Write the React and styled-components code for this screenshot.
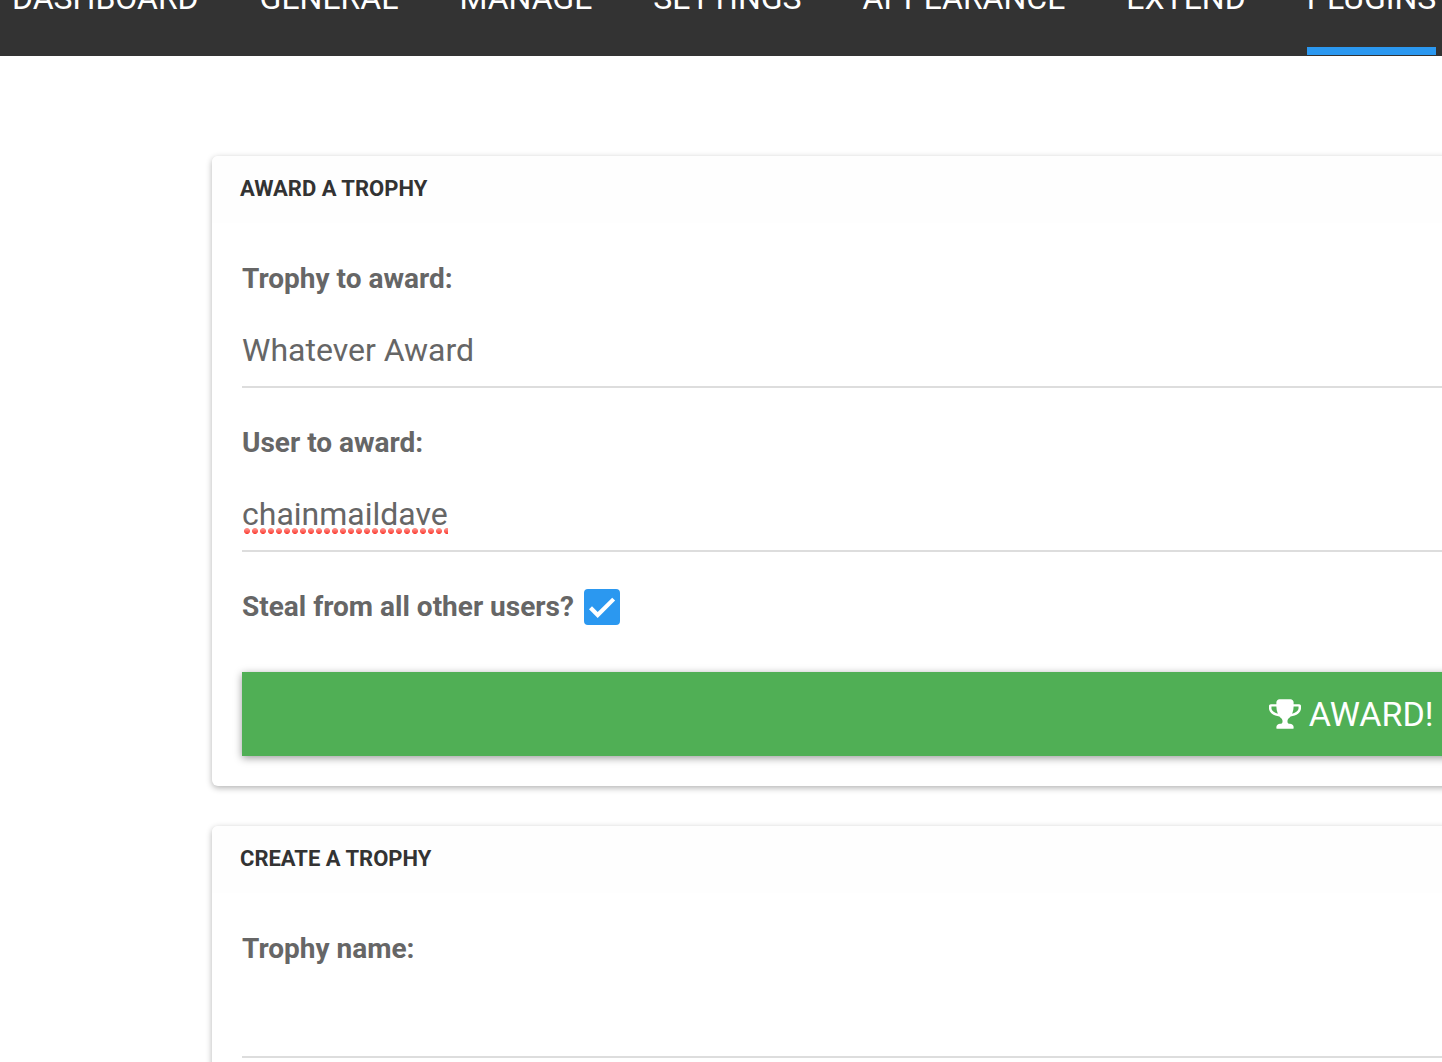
import React, { useState } from 'react';
import styled, { createGlobalStyle } from 'styled-components';

const GlobalStyle = createGlobalStyle`
  *, *::before, *::after { box-sizing: border-box; }
  body {
    margin: 0;
    background: #fff;
    color: #666;
    font-family: Roboto, "Liberation Sans", sans-serif;
  }
`;

const Page = styled.div`
  height: 100vh;
  overflow: hidden;
`;

const TopBar = styled.header`
  height: 56px;
  overflow: hidden;
  background: #333;
`;

const Menu = styled.nav`
  display: flex;
  align-items: flex-end;
  gap: 61px;
  height: 100%;
  padding: 0 0 1px 12px;
`;

const MenuLink = styled.a`
  flex: none;
  padding-bottom: 29px;
  border-bottom: 8px solid ${({ $active }) => ($active ? '#2b98f0' : 'transparent')};
  color: #fff;
  font-size: 32px;
  line-height: 40px;
  text-decoration: none;
  text-transform: uppercase;
`;

const Content = styled.main`
  display: flex;
  flex-direction: column;
  gap: 40px;
  width: 158vw;
  margin: 100px 0 40px 212px;
`;

const Card = styled.section`
  border-radius: 6px;
  background: #fff;
  box-shadow: 0 2px 6px rgba(0, 0, 0, 0.3);
`;

const CardTitle = styled.h2`
  margin: 0;
  padding: 17px 28px 18px;
  border-radius: 6px 6px 0 0;
  background: #fefefe;
  color: #333;
  font-size: 22px;
  font-weight: 700;
  line-height: 32px;
  text-transform: uppercase;
`;

const Form = styled.form`
  display: flex;
  flex-direction: column;
  gap: 35px;
  padding: 36px 30px 30px;
`;

const Field = styled.div`
  display: flex;
  flex-direction: column;
  gap: 15px;
`;

const Label = styled.label`
  font-size: 28px;
  font-weight: 700;
  line-height: 40px;
`;

const ControlLine = styled.div`
  display: flex;
  height: 74px;
  border-bottom: 2px solid #ddd;
`;

const controlText = `
  min-width: 0;
  padding: 0;
  border: 0;
  outline: 0;
  appearance: none;
  background: transparent;
  color: #666;
  font-family: inherit;
  font-size: 32px;
`;

const Select = styled.select`
  ${controlText}
  flex: 1;
`;

const TextInput = styled.input`
  ${controlText}
  flex: 1;
  ${({ $fit }) => $fit && 'field-sizing: content;'}
`;

const Misspelled = styled.span`
  position: relative;
  display: flex;

  &::after {
    content: '';
    position: absolute;
    right: 0;
    bottom: 16px;
    left: 1px;
    height: 6px;
    background: linear-gradient(#ff9c96, #fb3b30);
    mask: radial-gradient(circle at 4px 3px, #000 2.6px, transparent 3.4px) 0 0 / 8px 6px repeat-x;
    pointer-events: none;
  }
`;

const CheckRow = styled.div`
  display: flex;
  align-items: center;
  gap: 10px;
`;

const CheckWrap = styled.span`
  display: grid;

  & > * { grid-area: 1 / 1; }
`;

const Checkbox = styled.input`
  width: 36px;
  height: 36px;
  margin: 0;
  appearance: none;
  border: 4px solid #666;
  border-radius: 4px;

  &:checked {
    border-color: #2b98f0;
    background: #2b98f0;
  }
`;

const CheckMark = styled.svg`
  width: 36px;
  height: 36px;
  fill: #fff;
  pointer-events: none;
`;

const SubmitButton = styled.button`
  display: flex;
  align-items: center;
  justify-content: center;
  gap: 8px;
  height: 84px;
  margin-top: 10px;
  border: 0;
  background: #50af55;
  box-shadow: 0 2px 8px rgba(0, 0, 0, 0.4);
  color: #fff;
  font-family: inherit;
  font-size: 34px;
  text-transform: uppercase;
`;

const menuItems = ['Dashboard', 'General', 'Manage', 'Settings', 'Appearance', 'Extend', 'Plugins'];

function TrophyIcon() {
  return (
    <svg width="32" height="30" viewBox="64 128 1664 1536" fill="currentColor" aria-hidden="true">
      <path d="M522 883q-74-162-74-371h-256v96q0 78 94.5 162t235.5 113zm1078-275v-96h-256q0 209-74 371 141-29 235.5-113t94.5-162zm128-128v128q0 71-41.5 143t-112 130-173 97.5-215.5 44.5q-42 54-95 95-38 34-52.5 72.5t-14.5 89.5q0 54 30.5 91t97.5 37q75 0 133.5 45.5t58.5 114.5v64q0 14-9 23t-23 9h-832q-14 0-23-9t-9-23v-64q0-69 58.5-114.5t133.5-45.5q67 0 97.5-37t30.5-91q0-51-14.5-89.5t-52.5-72.5q-53-41-95-95-113-5-215.5-44.5t-173-97.5-112-130-41.5-143v-128q0-40 28-68t68-28h288v-96q0-66 47-113t113-47h576q66 0 113 47t47 113v96h288q40 0 68 28t28 68z" />
    </svg>
  );
}

export default function App() {
  const [user, setUser] = useState('chainmaildave');
  const [steal, setSteal] = useState(true);
  const [name, setName] = useState('');

  return (
    <Page>
      <GlobalStyle />
      <TopBar>
        <Menu>
          {menuItems.map((item) => (
            <MenuLink key={item} href={`#${item.toLowerCase()}`} $active={item === 'Plugins'}>
              {item}
            </MenuLink>
          ))}
        </Menu>
      </TopBar>
      <Content>
        <Card>
          <CardTitle>Award a Trophy</CardTitle>
          <Form onSubmit={(e) => e.preventDefault()}>
            <Field>
              <Label htmlFor="trophy">Trophy to award:</Label>
              <ControlLine>
                <Select id="trophy">
                  <option>Whatever Award</option>
                </Select>
              </ControlLine>
            </Field>
            <Field>
              <Label htmlFor="user">User to award:</Label>
              <ControlLine>
                <Misspelled>
                  <TextInput
                    id="user"
                    type="text"
                    spellCheck={false}
                    $fit
                    value={user}
                    onChange={(e) => setUser(e.target.value)}
                  />
                </Misspelled>
              </ControlLine>
            </Field>
            <CheckRow>
              <Label htmlFor="steal">Steal from all other users?</Label>
              <CheckWrap>
                <Checkbox
                  id="steal"
                  type="checkbox"
                  checked={steal}
                  onChange={(e) => setSteal(e.target.checked)}
                />
                {steal && (
                  <CheckMark viewBox="0 0 36 36" aria-hidden="true">
                    <path d="M5 20.2 8 17.2 13.7 22.9 28.2 8.7 31.1 11.6 13.7 29Z" />
                  </CheckMark>
                )}
              </CheckWrap>
            </CheckRow>
            <SubmitButton type="submit">
              <TrophyIcon />
              Award!
            </SubmitButton>
          </Form>
        </Card>
        <Card>
          <CardTitle>Create a Trophy</CardTitle>
          <Form onSubmit={(e) => e.preventDefault()}>
            <Field>
              <Label htmlFor="name">Trophy name:</Label>
              <ControlLine>
                <TextInput id="name" type="text" value={name} onChange={(e) => setName(e.target.value)} />
              </ControlLine>
            </Field>
          </Form>
        </Card>
      </Content>
    </Page>
  );
}
